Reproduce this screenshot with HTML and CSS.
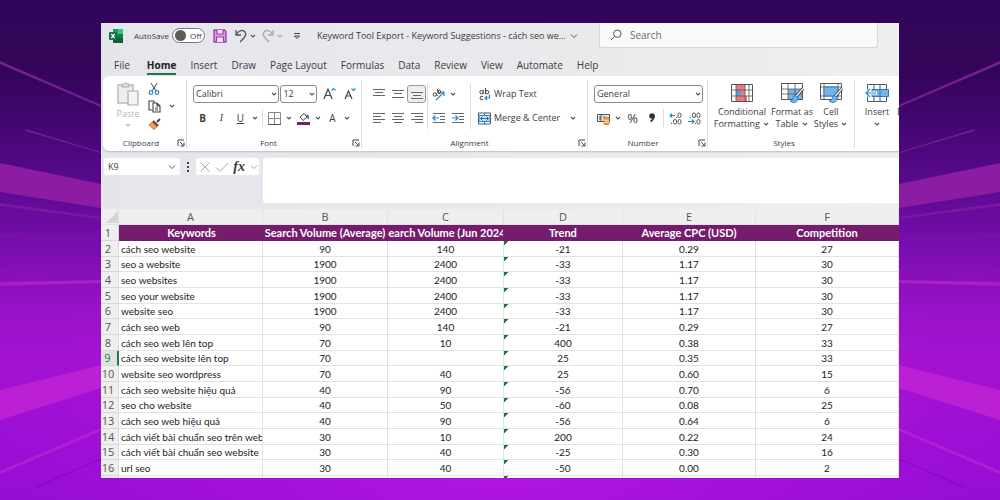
FILE: index.html
```html
<!DOCTYPE html>
<html lang="en">
<head>
<meta charset="utf-8">
<title>Keyword Tool Export</title>
<link rel="stylesheet" href="styles.css">
</head>
<body>
<svg class="backdrop" viewBox="0 0 1000 500" preserveAspectRatio="none" aria-hidden="true">
  <defs>
    <linearGradient id="sky" x1="0" y1="0" x2="0" y2="1">
      <stop offset="0" stop-color="#30065a"/><stop offset=".14" stop-color="#330558"/>
      <stop offset=".24" stop-color="#420670"/><stop offset=".38" stop-color="#5c0a92"/>
      <stop offset=".5" stop-color="#7b0db0"/><stop offset=".62" stop-color="#9812c8"/>
      <stop offset=".72" stop-color="#a212d2"/><stop offset="1" stop-color="#960dd6"/>
    </linearGradient>
    <radialGradient id="glow" cx=".5" cy=".86" r=".5">
      <stop offset="0" stop-color="#c018ea" stop-opacity=".8"/><stop offset="1" stop-color="#b014e0" stop-opacity="0"/>
    </radialGradient>
    <g id="rays">
      <path d="M0 61L101 105V107L0 64z" fill="#76208f"/>
      <path d="M25 129L101 152V153L26 131z" fill="#74248f"/>
      <path d="M0 163L101 184V208L0 192z" fill="#8c1ca2"/>
      <path d="M0 203L101 217V219L0 206z" fill="#7b17a3"/>
      <path d="M0 236L101 240M0 257L101 258M0 270L60 280" stroke="#8a18b4" stroke-width="1" opacity=".5"/>
      <path d="M0 282L101 280V283L0 286z" fill="#a820c6"/>
      <path d="M0 390L101 365V388L0 420z" fill="#bb20d5"/>
      <path d="M0 471L101 428V431L0 474z" fill="#b41fd2"/>
      <path d="M0 455L101 415M0 484L101 445" stroke="#a818cf" opacity=".5"/>
      <path d="M36 487L101 459" stroke="#7c0aae"/>
    </g>
  </defs>
  <rect width="1000" height="500" fill="url(#sky)"/>
  <rect width="1000" height="500" fill="url(#glow)"/>
  <use href="#rays"/>
  <use href="#rays" transform="matrix(-1 0 0 1 1000 0)"/>
</svg>

<svg class="defs" aria-hidden="true">
  <symbol id="chev" viewBox="0 0 8 8"><path d="M2 3L4 5L6 3" fill="none" stroke="currentColor" stroke-width="1.1"/></symbol>
  <symbol id="chev-big" viewBox="0 0 8 8"><path d="M1 2.5L4 5.5L7 2.5" fill="none" stroke="currentColor"/></symbol>
  <symbol id="launch" viewBox="0 0 8 8"><path d="M1 7V1H7M3 3L6.500 6.500M7 3.500V7H3.500" fill="none" stroke="#444"/></symbol>
  <symbol id="brush" viewBox="0 0 14 16"><path d="M13 1L6 9" stroke="#444" stroke-width="3"/><path d="M13 1L6 9" stroke="#fff" stroke-width="1.200"/><path d="M6 8Q3 8 3 11Q3 13 0 13.500Q5 17 7.500 13Q9 10 6 8z" fill="#75b4ea" stroke="#2273b8" stroke-width=".8"/></symbol>
</svg>

<main class="window">
  <header class="titlebar">
    <svg class="logo" viewBox="0 0 14 14"><path d="M4 0H14V14H4z" fill="#1d9e5f"/><path d="M9 0H14V5H9z" fill="#35c481"/><path d="M4 7H14V14H4z" fill="#12603a"/><path d="M9 5H14V9H9z" fill="#107c41"/><rect y="3" width="8" height="8" rx="1" fill="#0f7540"/><path d="M2.300 5L5.700 9.200M5.700 5L2.300 9.200" stroke="#fff" stroke-width="1.200"/></svg>
    <label class="autosave">AutoSave <span class="toggle"><input type="checkbox"><span>Off</span></span></label>
    <button class="save" aria-label="Save"><svg viewBox="0 0 14 14" width="14" height="14"><path d="M1 1H11.500L13 2.500V13H1z" fill="#dc9be2" stroke="#a23aac" stroke-width="1.300"/><path d="M4 1V5H10V1M3.500 13V8H10.500V13" fill="#f4e8f6" stroke="#a23aac" stroke-width="1.200"/></svg></button>
    <button class="undo" aria-label="Undo"><svg viewBox="0 0 14 14" width="14" height="14"><path d="M2 1V6H7M2 6C5 1 9 .5 11 3C13 5.500 11 8 6 13" fill="none" stroke="#555" stroke-width="1.300"/></svg></button>
    <button class="drop" aria-label="Undo list"><svg class="chev"><use href="#chev"/></svg></button>
    <button class="undo redo" aria-label="Redo"><svg viewBox="0 0 14 14" width="14" height="14"><path d="M12 1V6H7M12 6C9 1 5 .5 3 3C1 5.500 3 8 8 13" fill="none" stroke="#aaa" stroke-width="1.300"/></svg></button>
    <button class="drop faded" aria-label="Redo list"><svg class="chev"><use href="#chev"/></svg></button>
    <button class="customize" aria-label="Customize toolbar"><svg viewBox="0 0 8 8" width="8" height="8"><path d="M1 1.500H7M1.500 4H6.500L4 6.500z" fill="none" stroke="#444"/></svg></button>
    <span class="doc">Keyword Tool Export - Keyword Suggestions - cách seo we...</span>
    <button class="drop" aria-label="File menu"><svg class="chev"><use href="#chev-big"/></svg></button>
    <label class="search"><svg viewBox="0 0 12 12" width="12" height="12"><circle cx="7.300" cy="4.700" r="3.700" fill="none" stroke="#555"/><path d="M4.700 7.300L1 11" stroke="#555"/></svg><input type="search" placeholder="Search" aria-label="Search"></label>
  </header>

  <nav class="tabs">
    <a href="#">File</a><a href="#" class="active">Home</a><a href="#">Insert</a><a href="#">Draw</a><a href="#">Page Layout</a><a href="#">Formulas</a><a href="#">Data</a><a href="#">Review</a><a href="#">View</a><a href="#">Automate</a><a href="#">Help</a>
  </nav>

  <section class="ribbon">
    <div class="group clipboard">
      <div class="body">
        <button class="paste"><svg viewBox="0 0 22 24" width="22" height="24"><path d="M1 3H16V21H1z" fill="#eee" stroke="#bbb" stroke-width="1.500"/><path d="M5 4V2H7Q8.500 -1 10 2H12V5H5z" fill="#ddd" stroke="#aaa"/><path d="M11 9H21V23H11z" fill="#f4f4f4" stroke="#aaa" stroke-width="1.200"/></svg><span>Paste</span><svg class="chev"><use href="#chev"/></svg></button>
        <div class="clip-tools">
          <button aria-label="Cut"><svg viewBox="0 0 12 13" width="12" height="13"><path d="M3 1L8 9M9 1L4 9" stroke="#444"/><circle cx="3" cy="10.500" r="1.800" fill="none" stroke="#2b88d0" stroke-width="1.200"/><circle cx="9" cy="10.500" r="1.800" fill="none" stroke="#2b88d0" stroke-width="1.200"/></svg></button>
          <button aria-label="Copy"><svg viewBox="0 0 13 13" width="13" height="13"><path d="M5 10H1V1H6V3M5 3H9L12 6V12H5zM9 3V6H12M7 8H10M7 10H10" fill="none" stroke="#444" stroke-width="1.100"/></svg></button>
          <button aria-label="Format painter"><svg viewBox="0 0 13 12" width="13" height="12"><path d="M12 1L9 4M5 3L10 8" stroke="#444" stroke-width="2"/><path d="M4 4L9 9L6 11.500L.8 6.500Q3 6.500 4 4z" fill="#f3a04c" stroke="#d9751d"/></svg></button>
        </div>
        <button class="drop mid" aria-label="Copy options"><svg class="chev"><use href="#chev"/></svg></button>
      </div>
      <div class="label"><span>Clipboard</span><svg class="launch"><use href="#launch"/></svg></div>
    </div>

    <div class="group font">
      <div class="body stack">
        <div class="row">
          <span class="pick name"><select aria-label="Font"><option>Calibri</option></select><svg class="chev"><use href="#chev"/></svg></span>
          <span class="pick size"><select aria-label="Font size"><option>12</option></select><svg class="chev"><use href="#chev"/></svg></span>
          <button class="grow" aria-label="Increase font size"><svg viewBox="0 0 14 14" width="14" height="14"><path d="M1 12L5 2L9 12M2.300 8.500H7.700" fill="none" stroke="#444" stroke-width="1.200"/><path d="M8.500 3.500L10.500 1.500L12.500 3.500" fill="none" stroke="#2b88d0" stroke-width="1.200"/></svg></button>
          <button class="grow" aria-label="Decrease font size"><svg viewBox="0 0 14 14" width="14" height="14"><path d="M2 12L5.500 4L9 12M3.200 9H7.800" fill="none" stroke="#444" stroke-width="1.200"/><path d="M8.500 1.500L10.500 3.500L12.500 1.500" fill="none" stroke="#2b88d0" stroke-width="1.200"/></svg></button>
        </div>
        <div class="row">
          <button class="cell"><b>B</b></button><button class="cell serif"><i>I</i></button><button class="cell"><u>U</u></button>
          <button class="drop" aria-label="Underline options"><svg class="chev"><use href="#chev"/></svg></button>
          <span class="rule"></span>
          <button class="cell" aria-label="Borders"><svg viewBox="0 0 13 13" width="13" height="13"><path d="M.5 .5H12.500V12.500H.5zM6.500 1V12M1 6.500H12" fill="none" stroke="#888"/><path d="M0 12.500H13" stroke="#555"/></svg></button>
          <button class="drop" aria-label="Border options"><svg class="chev"><use href="#chev"/></svg></button>
          <button class="cell" aria-label="Fill colour"><svg viewBox="0 0 13 13" width="13" height="13"><path d="M3 5L7 1.500L10 5L6 8.500z" fill="#fff" stroke="#444"/><path d="M9.500 3Q12 4 11 7" fill="none" stroke="#2b6cab" stroke-width="1.500"/><path d="M0 10H13V13H0z" fill="#7a1f70"/></svg></button>
          <button class="drop" aria-label="Fill options"><svg class="chev"><use href="#chev"/></svg></button>
          <button class="cell" aria-label="Font colour">A</button>
          <button class="drop" aria-label="Font colour options"><svg class="chev"><use href="#chev"/></svg></button>
        </div>
      </div>
      <div class="label"><span>Font</span><svg class="launch"><use href="#launch"/></svg></div>
    </div>

    <div class="group alignment">
      <div class="body">
        <div class="aligns">
          <button class="cell" aria-label="Top align"><svg viewBox="0 0 12 12" width="12" height="12"><path d="M0 1.500H12M2 4.500H10M0 7.500H12" stroke="#666"/></svg></button>
          <button class="cell" aria-label="Middle align"><svg viewBox="0 0 12 12" width="12" height="12"><path d="M0 2.500H12M2 5.500H10M0 9.500H12" stroke="#666"/></svg></button>
          <button class="cell pressed" aria-label="Bottom align"><svg viewBox="0 0 12 12" width="12" height="12"><path d="M0 4.500H12M2 7.500H10M0 10.500H12" stroke="#666"/></svg></button>
          <button class="cell" aria-label="Align left"><svg viewBox="0 0 12 12" width="12" height="12"><path d="M0 1.500H12M0 4.500H8M0 7.500H12M0 10.500H8" stroke="#666"/></svg></button>
          <button class="cell" aria-label="Center"><svg viewBox="0 0 12 12" width="12" height="12"><path d="M0 1.500H12M2 4.500H10M0 7.500H12M2 10.500H10" stroke="#666"/></svg></button>
          <button class="cell" aria-label="Align right"><svg viewBox="0 0 12 12" width="12" height="12"><path d="M0 1.500H12M4 4.500H12M0 7.500H12M4 10.500H12" stroke="#666"/></svg></button>
        </div>
        <span class="rule tall"></span>
        <div class="indents">
          <button class="cell" aria-label="Orientation"><svg viewBox="0 0 13 13" width="13" height="13"><path d="M4 12L11.500 4.500M8 4H12V8" fill="none" stroke="#2b88d0" stroke-width="1.200"/><circle cx="2.800" cy="6.500" r="1.700" fill="none" stroke="#444"/><path d="M4 5L5.500 8M5 1L8 6" stroke="#444"/><circle cx="7.200" cy="3.800" r="1.600" fill="none" stroke="#444"/></svg></button>
          <button class="drop" aria-label="Orientation options"><svg class="chev"><use href="#chev"/></svg></button>
          <button class="cell" aria-label="Decrease indent"><svg viewBox="0 0 12 12" width="12" height="12"><path d="M0 1.500H12M7 4.500H12M7 7.500H12M0 10.500H12" stroke="#666"/><path d="M0 6H6M2.500 3.500L0 6L2.500 8.500" fill="none" stroke="#2b88d0" stroke-width="1.200"/></svg></button>
          <button class="cell" aria-label="Increase indent"><svg viewBox="0 0 12 12" width="12" height="12"><path d="M0 1.500H12M7 4.500H12M7 7.500H12M0 10.500H12" stroke="#666"/><path d="M0 6H6M3.500 3.500L6 6L3.500 8.500" fill="none" stroke="#2b88d0" stroke-width="1.200"/></svg></button>
        </div>
        <span class="rule tall"></span>
        <div class="stack wide">
          <button class="text"><svg viewBox="0 0 13 13" width="13" height="13"><circle cx="3.500" cy="4.200" r="1.700" fill="none" stroke="#444"/><path d="M5.200 2V6M7.500 0V6M5 8.500Q2 7.500 2 10Q2 12.500 5 11.500" fill="none" stroke="#444"/><circle cx="9.200" cy="4.200" r="1.700" fill="none" stroke="#444"/><path d="M11.500 6.500V10H7M9 8L7 10L9 12" fill="none" stroke="#2b88d0" stroke-width="1.200"/></svg>Wrap Text</button>
          <div class="row between"><button class="text"><svg viewBox="0 0 13 13" width="13" height="13"><path d="M.5 1H12.500V12H.5z" fill="#fff" stroke="#555"/><path d="M1 3.500H12V9.500H1z" fill="#cfe6f8" stroke="#2b88d0"/><path d="M2.500 6.500H10.500M4.500 4.500L2.500 6.500L4.500 8.500M8.500 4.500L10.500 6.500L8.500 8.500M6.500 1V3M6.500 10V12" fill="none" stroke="#1d6fb4"/></svg>Merge &amp; Center</button><button class="drop" aria-label="Merge options"><svg class="chev"><use href="#chev"/></svg></button></div>
        </div>
      </div>
      <div class="label"><span>Alignment</span><svg class="launch"><use href="#launch"/></svg></div>
    </div>

    <div class="group number">
      <div class="body stack">
        <div class="row"><span class="pick format"><select aria-label="Number format"><option>General</option></select><svg class="chev"><use href="#chev"/></svg></span></div>
        <div class="row">
          <button class="cell" aria-label="Currency"><svg viewBox="0 0 13 13" width="13" height="13"><path d="M.5 2.500H12.500V9.500H.5z" fill="#e8e8e8" stroke="#555"/><path d="M3 4V8M3 4H5M3 6H5M3 8H5M7 4V6" stroke="#555"/><path d="M7 6Q9.500 4.500 12 6V12Q9.500 13.500 7 12z" fill="#f29a4a" stroke="#d2691e" stroke-width=".8"/><path d="M7 8Q9.500 9 12 8M7 10Q9.500 11 12 10" fill="none" stroke="#fff" stroke-width=".7"/></svg></button>
          <button class="drop" aria-label="Currency options"><svg class="chev"><use href="#chev"/></svg></button>
          <button class="cell percent">%</button>
          <button class="cell" aria-label="Comma style"><svg viewBox="0 0 8 12" width="8" height="12"><circle cx="4" cy="4" r="2.800" fill="#333"/><path d="M5.800 4Q6 7.500 2.500 9.500" fill="none" stroke="#333" stroke-width="1.700"/></svg></button>
          <span class="rule"></span>
          <button class="cell" aria-label="Increase decimal"><svg viewBox="0 0 13 13" width="13" height="13"><path d="M1 3.500H6M3 1.500L1 3.500L3 5.500" fill="none" stroke="#2b88d0" stroke-width="1.200"/><g fill="none" stroke="#555"><rect x="9" y="1" width="3" height="4.500" rx="1.500"/><rect x="4.500" y="7.500" width="3" height="4.500" rx="1.500"/><rect x="9" y="7.500" width="3" height="4.500" rx="1.500"/></g><path d="M2 11H3V12H2zM7 5H8V6H7z" fill="#444"/></svg></button>
          <button class="cell" aria-label="Decrease decimal"><svg viewBox="0 0 13 13" width="13" height="13"><path d="M0 9.500H6M4 7.500L6 9.500L4 11.500" fill="none" stroke="#2b88d0" stroke-width="1.200"/><g fill="none" stroke="#555"><rect x="4.500" y="1" width="3" height="4.500" rx="1.500"/><rect x="9" y="1" width="3" height="4.500" rx="1.500"/><rect x="9" y="7.500" width="3" height="4.500" rx="1.500"/></g><path d="M2 5H3V6H2zM7 11H8V12H7z" fill="#444"/></svg></button>
        </div>
      </div>
      <div class="label"><span>Number</span><svg class="launch"><use href="#launch"/></svg></div>
    </div>

    <div class="group styles">
      <div class="body">
        <button class="big cond"><svg viewBox="0 0 22 18" width="22" height="18"><path d="M.5 .5H21.500V17.500H.5z" fill="#fff" stroke="#555"/><path d="M5 1H14V6H5zM5 12H16V17H5z" fill="#f4777b"/><path d="M5 6H10V12H5z" fill="#5b9fdc"/><path d="M10 6H14V12H10z" fill="#f4777b"/><path d="M.5 6H21.500M.5 12H21.500M5 .5V17.500M14 .5V17.500M18 .5V17.500" fill="none" stroke="#555" stroke-width=".8"/></svg><span>Conditional<br>Formatting <svg class="chev"><use href="#chev"/></svg></span></button>
        <button class="big fmt"><svg viewBox="0 0 23 20" width="23" height="20"><path d="M.5 .5H21.500V16.500H.5z" fill="#fff" stroke="#555"/><path d="M7 6H21V16H7z" fill="#75b4ea"/><path d="M.5 6H21.500M.5 11H21.500M7 .5V16.500M14 .5V16.500" stroke="#555" stroke-width=".8"/><use href="#brush" x="9" y="4" width="14" height="17"/></svg><span>Format as<br>Table <svg class="chev"><use href="#chev"/></svg></span></button>
        <button class="big cells"><svg viewBox="0 0 23 20" width="23" height="20"><path d="M.5 .5H21.500V16.500H.5z" fill="#fff" stroke="#555"/><path d="M.5 4H21.500M.5 13H21.500M4 .5V16.500M18 .5V16.500" stroke="#555" stroke-width=".8"/><path d="M4 4H18V13H4z" fill="#75b4ea" stroke="#2b78bd"/><use href="#brush" x="9" y="4" width="14" height="17"/></svg><span>Cell<br>Styles <svg class="chev"><use href="#chev"/></svg></span></button>
      </div>
      <div class="label"><span>Styles</span></div>
    </div>

    <div class="group last">
      <div class="body">
        <button class="big ins"><svg viewBox="0 0 24 18" width="24" height="18"><path d="M2.500 .5H21.500V17.500H2.500zM9 .5V17.500M15 .5V17.500" fill="#fff" stroke="#555"/><path d="M7 5.500H23.500V12.500H7z" fill="#75b4ea" stroke="#2b78bd"/><path d="M15 5.500V12.500" stroke="#2b78bd"/><path d="M1 9H12M5 5L1 9L5 13" fill="none" stroke="#fff" stroke-width="3"/><path d="M1 9H11M5 5L1 9L5 13" fill="none" stroke="#2b88d0" stroke-width="1.200"/></svg><span>Insert<br><svg class="chev"><use href="#chev"/></svg></span></button>
        <button class="big del"><svg viewBox="0 0 24 18" width="24" height="18"><path d="M2.500 .5H21.500V17.500H2.500z" fill="#fff" stroke="#8a6fd0"/></svg><span>Delete<br><svg class="chev"><use href="#chev"/></svg></span></button>
      </div>
    </div>
  </section>

  <section class="formula">
    <label class="namebox"><input type="text" value="K9" aria-label="Name box"><svg class="chev"><use href="#chev-big"/></svg></label>
    <svg class="dots" viewBox="0 0 4 12"><path d="M1 1H3V3H1zM1 5H3V7H1zM1 9H3V11H1z" fill="#444"/></svg>
    <div class="fx">
      <button aria-label="Cancel"><svg viewBox="0 0 12 12" width="12" height="12"><path d="M1.500 1.500L10.500 10.500M10.500 1.500L1.500 10.500" stroke="#aaa"/></svg></button>
      <button aria-label="Enter"><svg viewBox="0 0 12 12" width="12" height="12"><path d="M0 6.500L4 10.500L12 2" fill="none" stroke="#aaa"/></svg></button>
      <button class="fn"><i>fx</i></button>
      <button class="faded" aria-label="Functions"><svg class="chev"><use href="#chev-big"/></svg></button>
    </div>
    <textarea aria-label="Formula bar"></textarea>
  </section>

  <table class="sheet">
    <colgroup><col class="c0"><col class="ca"><col class="cb"><col class="cc"><col class="cd"><col class="ce"><col></colgroup>
    <thead><tr><th class="corner"><svg viewBox="0 0 12 12" width="12" height="12"><path d="M12 0V12H0z" fill="#d6d6d6"/></svg></th><th>A</th><th>B</th><th>C</th><th>D</th><th>E</th><th>F</th></tr></thead>
    <tbody>
      <tr class="heads"><th>1</th><td>Keywords</td><td><span>Search Volume (Average)</span></td><td><span>Search Volume (Jun 2024)</span></td><td>Trend</td><td>Average CPC (USD)</td><td>Competition</td></tr>
      <tr><th>2</th><td>cách seo website</td><td>90</td><td>140</td><td>-21</td><td>0.29</td><td>27</td></tr>
      <tr><th>3</th><td>seo a website</td><td>1900</td><td>2400</td><td>-33</td><td>1.17</td><td>30</td></tr>
      <tr><th>4</th><td>seo websites</td><td>1900</td><td>2400</td><td>-33</td><td>1.17</td><td>30</td></tr>
      <tr><th>5</th><td>seo your website</td><td>1900</td><td>2400</td><td>-33</td><td>1.17</td><td>30</td></tr>
      <tr><th>6</th><td>website seo</td><td>1900</td><td>2400</td><td>-33</td><td>1.17</td><td>30</td></tr>
      <tr><th>7</th><td>cách seo web</td><td>90</td><td>140</td><td>-21</td><td>0.29</td><td>27</td></tr>
      <tr><th>8</th><td>cách seo web lên top</td><td>70</td><td>10</td><td>400</td><td>0.38</td><td>33</td></tr>
      <tr class="current"><th>9</th><td>cách seo website lên top</td><td>70</td><td></td><td>25</td><td>0.35</td><td>33</td></tr>
      <tr><th>10</th><td>website seo wordpress</td><td>70</td><td>40</td><td>25</td><td>0.60</td><td>15</td></tr>
      <tr><th>11</th><td>cách seo website hiệu quả</td><td>40</td><td>90</td><td>-56</td><td>0.70</td><td>6</td></tr>
      <tr><th>12</th><td>seo cho website</td><td>40</td><td>50</td><td>-60</td><td>0.08</td><td>25</td></tr>
      <tr><th>13</th><td>cách seo web hiệu quả</td><td>40</td><td>90</td><td>-56</td><td>0.64</td><td>6</td></tr>
      <tr><th>14</th><td>cách viết bài chuẩn seo trên web</td><td>30</td><td>10</td><td>200</td><td>0.22</td><td>24</td></tr>
      <tr><th>15</th><td>cách viết bài chuẩn seo website</td><td>30</td><td>40</td><td>-25</td><td>0.30</td><td>16</td></tr>
      <tr><th>16</th><td>url seo</td><td>30</td><td>40</td><td>-50</td><td>0.00</td><td>2</td></tr>
      <tr class="stub"><th></th><td></td><td></td><td></td><td></td><td></td><td></td></tr>
    </tbody>
  </table>
</main>
</body>
</html>
```
FILE: styles.css
```css
* { box-sizing: border-box; }
body {
  margin: 0;
  min-height: 100vh;
  padding: 23px 101px 22px;
  background: #5c0a92;
  color: #3c3c3c;
  font: 10px/12px "Open Sans", "Noto Sans", sans-serif;
}
.backdrop { position: fixed; inset: 0; z-index: -1; width: 100%; height: 100%; }
.defs { position: absolute; width: 0; height: 0; }
svg { display: block; flex: none; overflow: visible; }
button {
  display: flex;
  align-items: center;
  justify-content: center;
  margin: 0;
  padding: 0;
  border: 0;
  background: none;
  color: inherit;
  font: inherit;
  white-space: nowrap;
}
input, select, textarea { min-width: 0; margin: 0; color: inherit; font: inherit; }
.chev { width: 8px; height: 8px; color: #555; }
.faded .chev { color: #aaa; }
.drop { flex: none; width: 10px; }

.window { overflow: hidden; background: linear-gradient(90deg, #e5e6ec, #eaeaed 60%, #efefef); }

/* title bar */
.titlebar { display: flex; align-items: center; height: 25px; padding: 0 21px 0 8px; }
.logo { width: 14px; height: 14px; }
.autosave { display: flex; align-items: center; gap: 3px; margin-left: 11px; font-size: 8px; white-space: nowrap; }
.toggle {
  display: flex;
  align-items: center;
  gap: 4px;
  width: 33px;
  height: 15px;
  padding: 0 2px;
  border: 1px solid #777;
  border-radius: 8px;
  background: #fff;
}
.toggle input { width: 11px; height: 11px; border-radius: 50%; background: #5c5c5c; appearance: none; }
.save { margin-left: 8px; }
.undo { margin-left: 7px; }
.redo { margin-left: 3px; }
.customize { margin: 0 16px 0 8px; }
.doc { margin-right: 3px; white-space: nowrap; font-size: 9px; }
.search {
  display: flex;
  flex: 1;
  align-items: center;
  gap: 8px;
  height: 25px;
  margin-left: 20px;
  padding-left: 10px;
  border: 1px solid #d8d8dc;
  border-top: 0;
  border-radius: 0 0 3px 3px;
  background: #fafafb;
}
.search input { flex: 1; padding: 0; border: 0; background: none; outline: 0; }
.search input::placeholder { color: #666; opacity: 1; }

/* tabs */
.tabs { display: flex; gap: 14px; height: 28px; padding: 9px 13px 0; white-space: nowrap; }
.tabs a { height: 18px; line-height: 16px; color: #3c3c3c; text-decoration: none; }
.tabs .active { margin-left: 3px; border-bottom: 2px solid #1a7a43; color: #222; font-weight: 700; }

/* ribbon */
.ribbon {
  display: flex;
  margin-left: 2px;
  overflow: hidden;
  border-radius: 6px 0 0 6px;
  background: #fff;
  box-shadow: 0 1px 2px #bbbcc4;
}
.group {
  display: flex;
  flex: none;
  flex-direction: column;
  gap: 5px;
  padding: 6px 2px 0 6px;
  background: linear-gradient(#dcdcdc, #dcdcdc) right 4px / 1px 68px no-repeat;
}
.body { display: flex; height: 48px; }
.row { display: flex; align-items: center; height: 24px; }
.stack { flex-direction: column; }
.label { display: flex; align-items: center; height: 16px; padding-bottom: 1px; font-size: 8px; }
.label span { flex: 1; text-align: center; }
.launch { width: 8px; height: 8px; }
.cell { flex: none; width: 19px; height: 18px; }
.rule { flex: none; align-self: center; width: 1px; height: 18px; margin: 0 2px; background: #dcdcdc; }
.rule.tall { height: 46px; margin: 0 1px; }
.clipboard { width: 84px; padding-left: 14px; }
.clipboard .label { margin-left: -12px; }
.paste { flex-direction: column; align-self: flex-start; width: 22px; color: #b4b4b4; font-size: 9px; }
.paste span { line-height: 15px; }
.paste .chev { color: #b4b4b4; }
.clip-tools { display: grid; grid-template-rows: repeat(3, 13px); align-content: space-between; width: 22px; margin-left: 4px; justify-items: center; }
.mid { align-self: center; margin-left: 2px; }
.font { width: 175px; }
.font .label, .alignment .label { margin-left: -8px; }
.pick { position: relative; display: flex; height: 18px; }
.pick select {
  width: 100%;
  padding: 0 2px;
  border: 1px solid #8c8c8c;
  border-radius: 3px;
  background: #fff;
  font-size: 9px;
  appearance: none;
}
.pick .chev { position: absolute; top: 5px; right: 1px; }
.name { width: 87px; margin-right: 1px; }
.size { width: 37px; margin-right: 3px; }
.grow { width: 20px; }
.serif { font-family: "Liberation Serif", serif; }
.pressed { border: 1px solid #999; border-radius: 3px; background: #eee; }
.alignment { width: 226px; padding-left: 7px; }
.aligns { display: grid; grid-template-columns: repeat(3, 19px); grid-template-rows: repeat(2, 24px); align-items: center; }
.indents { display: grid; grid-template-columns: repeat(2, 19px); grid-template-rows: repeat(2, 24px); align-items: center; margin-right: 2px; }
.wide { display: flex; flex: 1; padding-left: 6px; }
.text { gap: 3px; height: 24px; align-self: flex-start; font-size: 9px; }
.between { justify-content: space-between; padding-right: 8px; }
.number { width: 120px; }
.number .label { margin-left: -6px; }
.format { width: 109px; }
.percent { font-size: 13px; }
.styles { width: 147px; padding-left: 7px; }
.big { flex: none; flex-direction: column; justify-content: flex-start; gap: 3px; padding-top: 1px; font-size: 9px; }
.big > svg { height: 20px; }
.big span .chev { display: inline-block; vertical-align: -1px; }
.cond { width: 54px; }
.fmt { width: 46px; }
.cells { width: 32px; }
.last { flex: 1 0 0; width: 0; overflow: hidden; background: none; }
.ins { width: 32px; }
.del { margin-left: 4px; align-items: flex-start; }

/* formula bar */
.formula { display: flex; align-items: flex-start; padding: 7px 0 6px 3px; }
.namebox { display: flex; align-items: center; width: 76px; height: 17px; padding: 0 4px; border-radius: 2px; background: #fff; }
.namebox input { flex: 1; padding: 0; border: 0; outline: 0; font-size: 9px; }
.dots { width: 4px; height: 12px; margin: 3px 6px; }
.fx { display: flex; align-items: center; justify-content: space-between; width: 63px; height: 17px; padding: 0 1px 0 3px; border-radius: 2px; background: #fff; }
.fn { font: 700 14px/15px "Liberation Serif", serif; }
.formula textarea { flex: 1; height: 45px; margin-left: 4px; border: 0; border-radius: 3px 0 0 3px; outline: 0; background: #fff; resize: none; }

/* sheet */
.sheet { width: 100%; table-layout: fixed; border-collapse: separate; border-spacing: 0; background: #fff; color: #222; font: 10px/14px Lato, "Open Sans", sans-serif; }
.c0 { width: 18px; }
.ca { width: 144px; }
.cb { width: 125px; }
.cc { width: 116px; }
.cd { width: 119px; }
.ce { width: 133px; }
.sheet th, .sheet td { height: 16px; padding: 0; overflow: hidden; border: 0 solid #e2e2e2; border-width: 0 1px 1px 0; text-align: center; white-space: nowrap; }
.sheet tbody tr:nth-child(3n) > * { height: 15px; }
.sheet th { background: #efefef; color: #555; font: 11px/14px "Open Sans", sans-serif; }
.sheet tbody th { padding-right: 3px; border-color: #d8d8d8; }
.corner svg { margin-left: 5px; }
.sheet td:nth-child(2) { padding-left: 2px; text-align: left; }
.sheet td:nth-child(5) { background: linear-gradient(135deg, #1b7d2c 3px, transparent 3px); }
.sheet .heads td { border-color: #751c6c; background: #751c6c; color: #fff; font-size: 11px; font-weight: 700; text-align: center; }
.heads td span { display: flex; justify-content: center; }
.sheet .current th { border-right: 2px solid #23784a; background: #dfe3e0; color: #23784a; }
.sheet .stub > * { height: 2px; border-bottom: 0; }
```
